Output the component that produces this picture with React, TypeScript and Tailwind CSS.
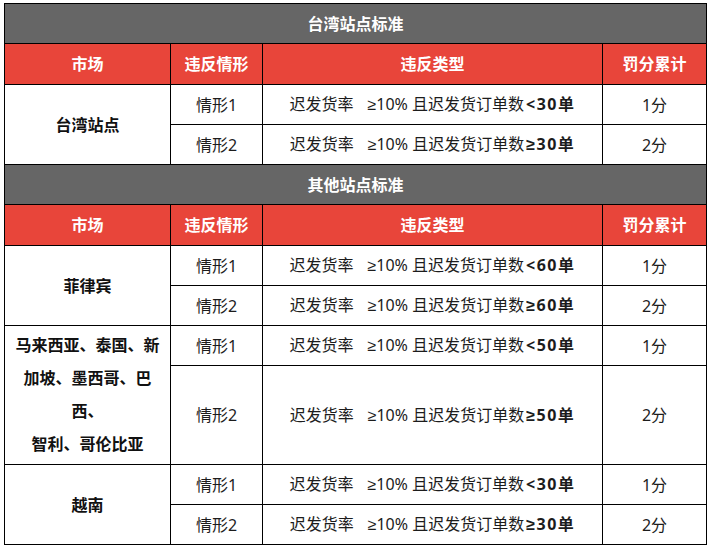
import React from "react";

const FONT = { fontFamily: '"Noto Sans", "Noto Sans CJK SC", sans-serif' };
const SYM = { fontFamily: '"Liberation Sans", "DejaVu Sans", sans-serif' };

function Ge() {
  return <span style={SYM}>≥</span>;
}

function Cond({ op, n }: { op: string; n: string }) {
  return (
    <span className="whitespace-nowrap">
      迟发货率
      <span className="ml-[14px]">
        <Ge />
        10%
      </span>{" "}
      且迟发货订单数
      <span className="ml-[2px] font-bold tracking-[1.5px]">
        {op === "≥" ? <Ge /> : op}
        {n}单
      </span>
    </span>
  );
}

function Title({ text }: { text: string }) {
  return (
    <tr className="h-[40px]">
      <td colSpan={4} className="border border-black bg-[#666666] text-center text-[16px] font-bold text-white">
        {text}
      </td>
    </tr>
  );
}

function Head() {
  const cls = "border border-black bg-[#e8453a] text-center text-[16px] font-bold text-white";
  return (
    <tr className="h-[41px]">
      <td className={cls}>市场</td>
      <td className={cls}>违反情形</td>
      <td className={cls}>违反类型</td>
      <td className={cls}>罚分累计</td>
    </tr>
  );
}

const cell = "border border-black text-center text-[16px] text-[#1c1c1c]";

function Group({ market, n, tall }: { market: React.ReactNode; n: string; tall?: boolean }) {
  return (
    <>
      <tr className="h-[40px]">
        <td rowSpan={2} className={cell + " font-bold text-[#111]"}>
          {market}
        </td>
        <td className={cell}>情形1</td>
        <td className={cell}>
          <Cond op="<" n={n} />
        </td>
        <td className={cell}>1分</td>
      </tr>
      <tr className={tall ? "h-[99px]" : "h-[40px]"}>
        <td className={cell}>情形2</td>
        <td className={cell}>
          <Cond op="≥" n={n} />
        </td>
        <td className={cell}>2分</td>
      </tr>
    </>
  );
}

export default function App() {
  return (
    <div className="h-[550px] w-[710px] bg-white pl-[4px] pt-[3px]" style={FONT}>
      <table className="w-[702px] table-fixed border-collapse">
        <colgroup>
          <col className="w-[166px]" />
          <col className="w-[92px]" />
          <col className="w-[340px]" />
          <col className="w-[104px]" />
        </colgroup>
        <tbody>
          <Title text="台湾站点标准" />
          <Head />
          <Group market="台湾站点" n="30" />
          <Title text="其他站点标准" />
          <Head />
          <Group market="菲律宾" n="60" />
          <Group
            market={
              <div className="leading-[33px] whitespace-nowrap">
                马来西亚、泰国、新
                <br />
                加坡、墨西哥、巴
                <br />
                西、
                <br />
                智利、哥伦比亚
              </div>
            }
            n="50"
            tall
          />
          <Group market="越南" n="30" />
        </tbody>
      </table>
    </div>
  );
}
